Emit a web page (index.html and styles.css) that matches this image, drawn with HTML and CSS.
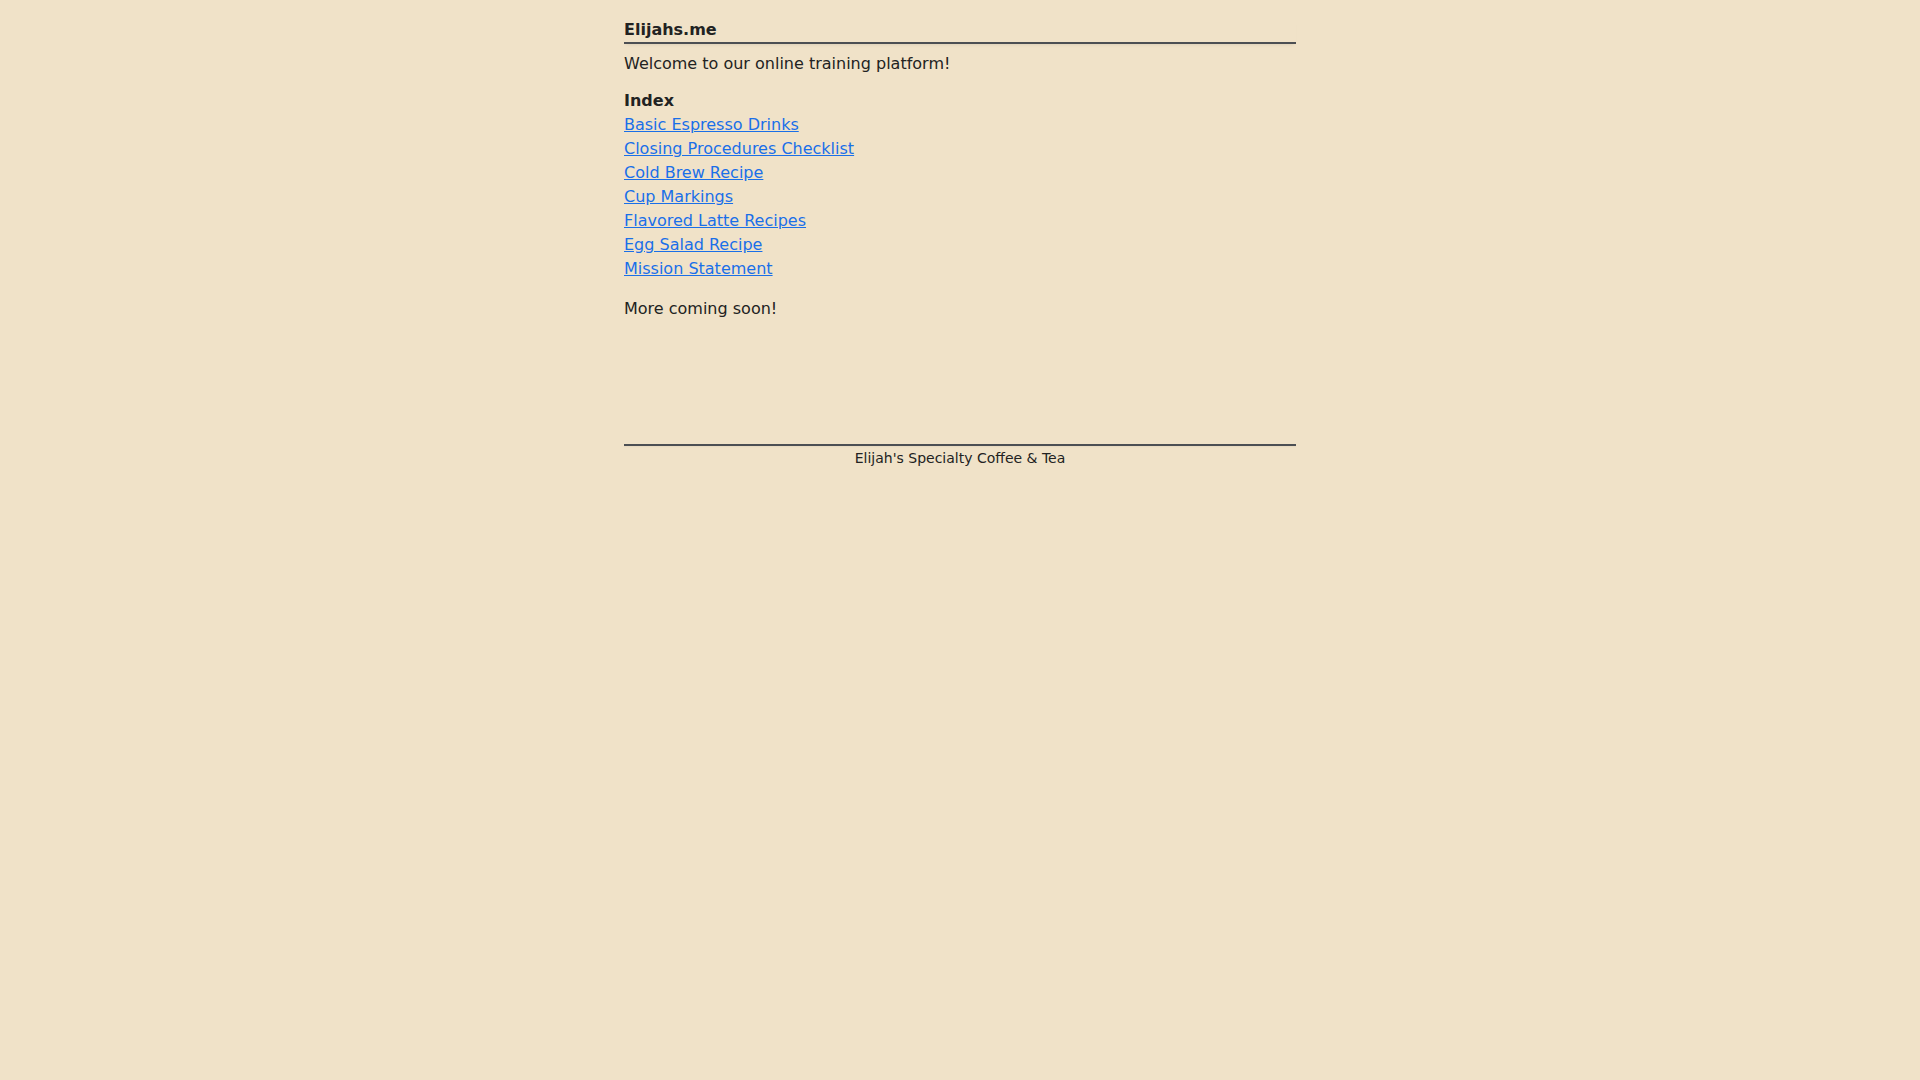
FILE: index.html
```html
<!DOCTYPE html>
<html lang="en">
<head>
<meta charset="utf-8">
<title>Elijahs.me</title>
<link rel="stylesheet" href="styles.css">
</head>
<body>
<div class="page">
  <header class="site-header">
    <h1 class="site-title">Elijahs.me</h1>
  </header>
  <main class="content">
    <p class="welcome">Welcome to our online training platform!</p>
    <h2 class="index-title">Index</h2>
    <ul class="index-list">
      <li><a href="#">Basic Espresso Drinks</a></li>
      <li><a href="#">Closing Procedures Checklist</a></li>
      <li><a href="#">Cold Brew Recipe</a></li>
      <li><a href="#">Cup Markings</a></li>
      <li><a href="#">Flavored Latte Recipes</a></li>
      <li><a href="#">Egg Salad Recipe</a></li>
      <li><a href="#">Mission Statement</a></li>
    </ul>
    <p class="more">More coming soon!</p>
  </main>
  <footer class="site-footer">Elijah's Specialty Coffee &amp; Tea</footer>
</div>
</body>
</html>
```

FILE: styles.css
```css
html, body {
  margin: 0;
  padding: 0;
  background: #f0e2c8;
}
body {
  font-family: "DejaVu Sans", sans-serif;
  font-size: 16px;
  line-height: 24px;
  color: #222222;
}
.page {
  max-width: 672px;
  margin: 0 auto;
  padding-top: 18px;
}
.site-header {
  border-bottom: 2px solid #4c4f53;
  box-shadow: 0 3px 3px -2px rgba(0, 0, 0, 0.08);
}
.site-title {
  margin: 0;
  font-size: 16px;
  line-height: 24px;
  font-weight: bold;
}
.content {
  padding-bottom: 123px;
}
.welcome {
  margin: 8px 0 0;
}
.index-title {
  margin: 13px 0 0;
  font-size: 16px;
  line-height: 24px;
  font-weight: bold;
}
.index-list {
  list-style: none;
  margin: 0;
  padding: 0;
}
.index-list a {
  color: #1a6fe8;
  text-decoration: underline;
}
.more {
  margin: 16px 0 0;
}
.site-footer {
  border-top: 2px solid #4c4f53;
  box-shadow: inset 0 3px 3px -3px rgba(0, 0, 0, 0.08);
  padding-top: 2px;
  text-align: center;
  font-size: 14px;
  line-height: 21px;
}
```
